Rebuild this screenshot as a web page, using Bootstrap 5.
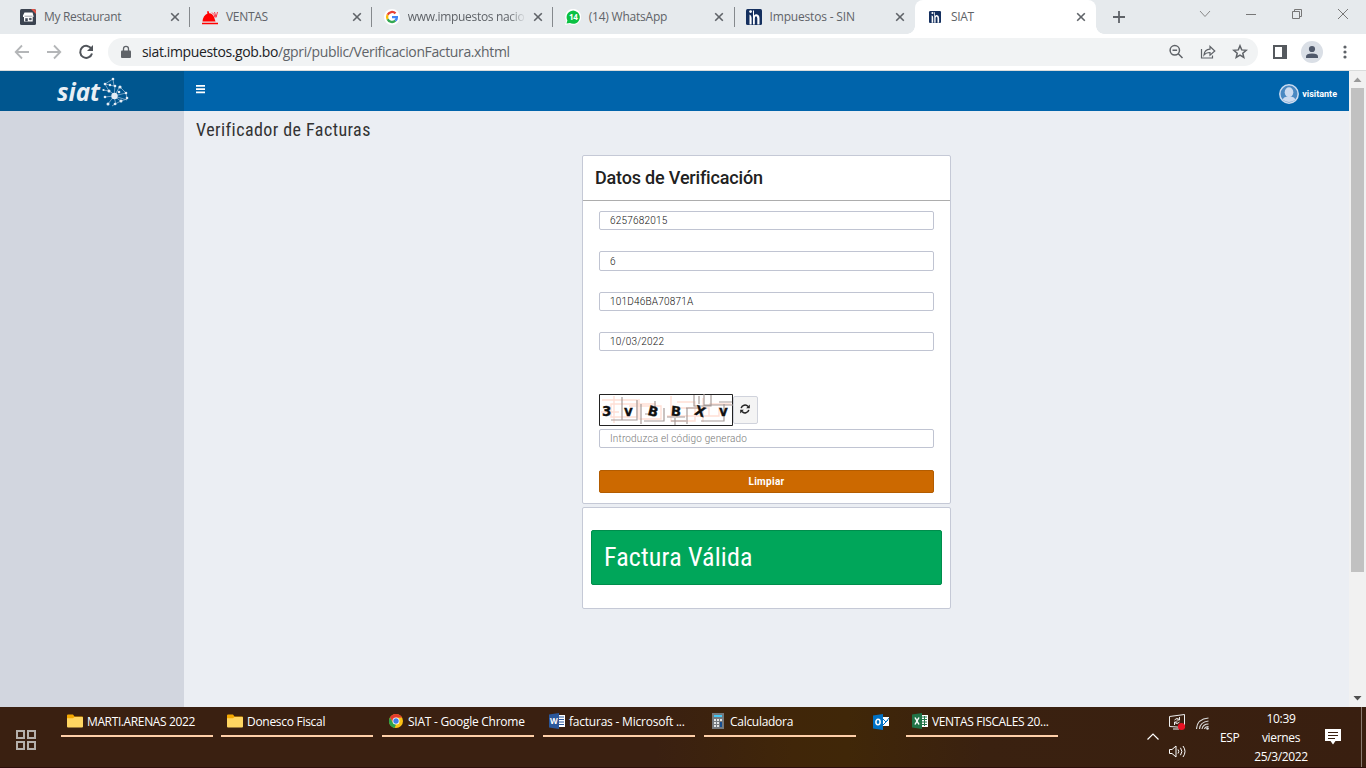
<!DOCTYPE html>
<html lang="es">
<head>
<meta charset="utf-8">
<title>SIAT</title>
<link rel="stylesheet" href="https://cdn.jsdelivr.net/npm/bootstrap@5.3.0/dist/css/bootstrap.min.css">
<script src="https://cdn.jsdelivr.net/npm/bootstrap@5.3.0/dist/js/bootstrap.bundle.min.js"></script>
<style>
body{width:1366px;height:768px;overflow:hidden;font-family:"Open Sans","Noto Sans",sans-serif;font-size:12px;line-height:16px;color:#5f6368;background:#fff}
svg{display:block;flex:none}
.tabstrip{height:34px;background:#e6eaed;padding-left:8px}
.tab{width:181.4px;height:34px;padding-left:12px;position:relative}
.tab .ttl{margin-left:8px;width:118px;font-size:12px;letter-spacing:-.32px;white-space:nowrap}
.tab .fade-end{-webkit-mask-image:linear-gradient(90deg,#000 85%,transparent);mask-image:linear-gradient(90deg,#000 85%,transparent)}
.tab .x{margin-left:8px}
.tab.sep::after{content:"";position:absolute;right:-1px;top:7px;width:1px;height:20px;background:#85898d}
.tab.on{background:#fff;border-radius:8px 8px 0 0}
.tab.on::before,.tab.on::after{content:"";position:absolute;bottom:0;width:8px;height:8px}
.tab.on::before{left:-8px;background:radial-gradient(circle at 0 0,transparent 7.5px,#fff 8px)}
.tab.on::after{right:-8px;background:radial-gradient(circle at 100% 0,transparent 7.5px,#fff 8px)}
.winbtn{width:46px;height:28px}
.toolbar{height:37px;border-bottom:1px solid #dadcdc;padding:4px 0 4px 14px}
.omni{width:1150px;height:28px;border-radius:14px;background:#f1f3f4;margin-left:14px;padding:0 10px 0 11px}
.url{margin-left:9px;font-size:14px;letter-spacing:-.37px;color:#5f6368;white-space:nowrap}
.url b{font-weight:400;color:#202124}
.view{height:636px}
.side{width:184px;background:#d2d6df}
.brand{height:40px;background:#00568f;padding:5px 0 0 57px}
.topbar{height:40px;background:#0064ab;padding:0 12px;font-family:Roboto,sans-serif;color:#fff}
.main-area{width:1165px;background:#ebeef3;font-family:Roboto,sans-serif;color:#333}
.cond{font-family:"Roboto Condensed",Roboto,sans-serif;font-stretch:75%}
.page-title{font-size:18px;line-height:24px;padding:7px 0 0 12px;margin:0;font-weight:400;color:#333;letter-spacing:.43px}
.panel{width:369px;background:#fff;border:1px solid #c5c9d6;border-radius:2px;margin-left:398px}
.panel-head{height:45px;border-bottom:1px solid #adadad;font-size:18px;font-weight:500;color:#212121;padding:0 12px;line-height:43px;letter-spacing:-.18px}
.panel .form-control{height:19px;min-height:0;padding:0 10px;border:1px solid #c0c4d2;border-radius:2px;font-family:Roboto,sans-serif;font-size:10px;line-height:17px;font-weight:300;color:#111;letter-spacing:.2px;box-shadow:none}
.panel .form-control::placeholder{color:#777;opacity:1;letter-spacing:.17px}
.refresh{width:25px;height:28px;background:#f4f4f4;border:1px solid #d0d3dc;border-radius:2px;padding:0}
.clear{height:23px;background:#cc6900;border:1px solid #b35c00;border-radius:2px;color:#fff;font-weight:700;font-size:10px;line-height:21px;padding:0;letter-spacing:.3px}
.clear:hover{background:#cc6900;color:#fff}
.valid{height:55px;background:#00a65a;border:1px solid #008d4c;border-radius:2px;color:#fff;font-size:26px;line-height:52px;padding:0 12px;margin:22px 8px 23px;letter-spacing:.16px}
.sbar{width:17px;background:#f1f1f1}
.thumb{width:13px;height:484px;background:#c1c1c1}
.taskbar{height:61px;color:#fff;background:linear-gradient(90deg,#3a2011 0,#3a2011 48%,#402609 58%,#402708 62%,#3a2110 72%,#391f10 100%);border-bottom:1px solid #2c0f0b}
.task{width:152px;height:30px;border-bottom:2px solid #ffcfa8;padding:1px 0 0 6px}
.task svg{margin-top:-1px}
.task span{margin-left:4px;font-size:12px;letter-spacing:-.29px;white-space:nowrap}
.tray{font-size:12px;letter-spacing:-.35px}
</style>
</head>
<body>
<svg width="0" height="0" class="position-absolute"><defs>
<symbol id="cross" viewBox="0 0 10 10"><path d="M1.200 1.200l7.600 7.600M8.800 1.200L1.200 8.800" stroke="#5f6368" stroke-width="1.600"/></symbol>
<symbol id="folder" viewBox="0 0 16 14"><path d="M0 1.500Q0 .5 1 .5h5l1.500 2H15q1 0 1 1V12H0z" fill="#f5a800"/><path d="M0 4.200h6L7.500 3H15q1 0 1 1v8.500q0 1-1 1H1q-1 0-1-1z" fill="#ffd662"/></symbol>
<symbol id="sin" viewBox="0 0 16 16"><rect width="16" height="16" rx="1.500" fill="#15305f"/><circle cx="4.600" cy="2.600" r="1.400" fill="#fff"/><path d="M3.500 5.500Q5.600 6 5.600 9v6.500H3.500zM7 1.500h1v5Q9 5 10.600 5.200 13.500 5.600 13.500 9.500v6h-2.200V9.500q-.2-2.200-1.300-2.200T8.800 9.500v6H7z" fill="#fff"/></symbol>
</defs></svg>

<div class="tabstrip d-flex">
  <div class="tab sep d-flex align-items-center">
    <svg width="16" height="16" viewBox="0 0 16 16"><rect width="16" height="16" rx="1.500" fill="#3b4350"/><path d="M11 0h3.500L16 1.500V5z" fill="#e25346"/><path d="M4.500 3.500h8l1 3.500v1h-.8v4.500H4V8H3V6.500z" fill="#fff"/><path d="M4.500 7.200h8M5.500 12V9.500h2V12zM9.300 9.300h2v1.500h-2z" fill="#3b4350" stroke="#3b4350" stroke-width=".5"/></svg>
    <span class="ttl">My Restaurant</span><svg class="x" width="10" height="10"><use href="#cross"/></svg></div>
  <div class="tab sep d-flex align-items-center" style="padding-left:12.600px">
    <svg width="16" height="16" viewBox="0 0 16 16"><path d="M0 13.800h16v1.500H0zM.5 12.500Q1 6.500 5.500 4.500L5 2.500 6.500 2l.7 2.200Q10.500 4.500 12 8l1.500 4.500z" fill="#f00"/><path d="M10 3.500q2.500 1.500 3 5M12.500 3l1.500 5M15.500 3l-1.500 5.500" stroke="#f23" stroke-width=".9" fill="none"/></svg>
    <span class="ttl">VENTAS</span><svg class="x" width="10" height="10"><use href="#cross"/></svg></div>
  <div class="tab sep d-flex align-items-center" style="padding-left:13px">
    <svg width="16" height="16" viewBox="0 0 16 16"><circle cx="8" cy="8" r="8" fill="#fff"/><g fill="none" stroke-width="2.300"><path d="M11.500 4.400A4.900 4.900 0 0 0 3.600 5.800" stroke="#ea4335"/><path d="M3.600 5.800a4.900 4.900 0 0 0 0 4.400" stroke="#fbbc05"/><path d="M3.600 10.200a4.900 4.900 0 0 0 7.700 1.500" stroke="#34a853"/><path d="M11.300 11.700Q13 10.200 12.900 8.200H8" stroke="#4285f4"/></g></svg>
    <span class="ttl fade-end">www.impuestos nacio</span><svg class="x" width="10" height="10" style="margin-left:7px"><use href="#cross"/></svg></div>
  <div class="tab sep d-flex align-items-center" style="padding-left:12.600px">
    <svg width="16" height="16" viewBox="0 0 16 16"><path d="M0 16L1.200 11.800A8 8 0 1 1 4.500 15z" fill="#fff"/><path d="M1.500 14.600l.9-3.200A6.600 6.600 0 1 1 5 14z" fill="#0bc143"/><text x="8.200" y="10.800" text-anchor="middle" font-size="8" font-weight="700" fill="#fff" font-family="Open Sans" letter-spacing="-.3">14</text></svg>
    <span class="ttl" style="letter-spacing:-.22px">(14) WhatsApp</span><svg class="x" width="10" height="10" style="margin-left:7.400px"><use href="#cross"/></svg></div>
  <div class="tab d-flex align-items-center">
    <svg width="16" height="16"><use href="#sin"/></svg>
    <span class="ttl" style="letter-spacing:-.18px">Impuestos - SIN</span><svg class="x" width="10" height="10" style="margin-left:7px"><use href="#cross"/></svg></div>
  <div class="tab on d-flex align-items-center">
    <svg width="16" height="16"><use href="#sin" x="1.500" y="2" width="13" height="12"/></svg>
    <span class="ttl">SIAT</span><svg class="x" width="10" height="10" style="margin-left:7px"><use href="#cross"/></svg></div>
  <svg class="align-self-center" style="margin-left:17px" width="12" height="12" viewBox="0 0 12 12"><path d="M6 0v12M0 6h12" stroke="#5f6368" stroke-width="1.800"/></svg>
  <div class="d-flex ms-auto">
    <div class="winbtn d-flex align-items-center justify-content-center"><svg width="12" height="8" viewBox="0 0 12 8" fill="none" stroke="#888"><path d="M1 1l5 5.500L11 1"/></svg></div>
    <div class="winbtn d-flex align-items-center justify-content-center"><svg width="10" height="10" fill="none" stroke="#777"><path d="M0 5.500h10"/></svg></div>
    <div class="winbtn d-flex align-items-center justify-content-center"><svg width="10" height="10" fill="none" stroke="#777"><path d="M.5 2.500h7v7h-7zM2.500 2.500v-2h7v7h-2"/></svg></div>
    <div class="winbtn d-flex align-items-center justify-content-center"><svg width="10" height="10" fill="none" stroke="#777"><path d="M0 0l10 10M10 0L0 10"/></svg></div>
  </div>
</div>

<div class="toolbar d-flex align-items-center">
  <svg width="16" height="16" viewBox="0 0 16 16" fill="none" stroke="#b4b6b8" stroke-width="1.800"><path d="M15 8H2M8 1.500L1.700 8 8 14.500"/></svg>
  <svg class="ms-3" width="16" height="16" viewBox="0 0 16 16" fill="none" stroke="#b4b6b8" stroke-width="1.800"><path d="M1 8h13M8 1.500L14.300 8 8 14.500"/></svg>
  <svg class="ms-3" width="16" height="16" viewBox="0 0 16 16" fill="none" stroke="#50545a" stroke-width="2"><path d="M13.500 5A6 6 0 1 0 14 9.500"/><path d="M15 1v6H9z" fill="#50545a" stroke="none"/></svg>
  <div class="omni d-flex align-items-center">
    <svg width="14" height="14" viewBox="0 0 14 14"><path d="M3 5.500h8q1 0 1 1V12q0 1-1 1H3q-1 0-1-1V6.500q0-1 1-1z" fill="#5f6368"/><path d="M4.500 6V3.800a2.500 2.500 0 0 1 5 0V6" fill="none" stroke="#5f6368" stroke-width="1.300"/></svg>
    <span class="url"><b>siat.impuestos.gob.bo</b>/gpri/public/VerificacionFactura.xhtml</span>
    <div class="d-flex align-items-center ms-auto gap-3">
      <svg width="16" height="16" viewBox="0 0 16 16" fill="none" stroke="#5f6368" stroke-width="1.500"><circle cx="6.800" cy="6.300" r="4.700"/><path d="M10.300 9.800l4.200 4.200M4.500 6.300h4.600"/></svg>
      <svg width="16" height="16" viewBox="0 0 16 16" fill="none" stroke="#5f6368" stroke-width="1.200"><path d="M1.500 5v9h11v-2.500"/><path d="M4 11q.5-5.500 6-5.800V2.500L14.800 7 10 11.200V8.500Q6 8.500 4 11z"/></svg>
      <svg width="16" height="16" viewBox="0 0 16 16" fill="none" stroke="#5f6368" stroke-width="1.500"><path d="M8 1.800l1.700 4.100 4.500.4-3.400 2.900 1 4.300L8 11.200l-3.800 2.300 1-4.300-3.400-2.900 4.500-.4z"/></svg>
    </div>
  </div>
  <svg style="margin-left:15px" width="14" height="14" viewBox="0 0 14 14"><path d="M0 0h14v14H0z" fill="#55595e"/><path d="M2 2h7v10H2z" fill="#fff"/></svg>
  <svg style="margin-left:14px" width="22" height="22" viewBox="0 0 22 22"><circle cx="11" cy="11" r="11" fill="#dadfe6"/><circle cx="11" cy="8" r="3.100" fill="#50596b"/><path d="M5 17v-1.500Q5 12.500 11 12.400q6 .1 6 3.100V17z" fill="#50596b"/></svg>
  <svg style="margin-left:18.500px" width="6" height="14" viewBox="0 0 6 14" fill="#5f6368"><circle cx="3" cy="2" r="1.600"/><circle cx="3" cy="7" r="1.600"/><circle cx="3" cy="12" r="1.600"/></svg>
</div>

<div class="view d-flex">
  <aside class="side">
    <div class="brand">
      <svg class="overflow-visible" width="74" height="34" viewBox="0 0 74 34"><text x="0" y="24.500" font-family="Open Sans" font-style="italic" font-weight="700" font-size="25" textLength="43" lengthAdjust="spacingAndGlyphs" fill="#e9eff5">siat</text>
      <g stroke="#a5c0d8" stroke-width=".7" fill="none"><path d="M48 8l8-5 1 7-9-2 4 7M52 15l6 4 5-9M57 20l-9 1M57 20l-6 8M57 20l2 9M57 20l8 6M57 20l13 4M57 20l12-3M58 10l-1 10M46 14l6 1M64 25l6-2-1-6-6-6M55 30l3-2 6-3"/></g>
      <g fill="#e4edf5"><circle cx="57.500" cy="20" r="3.200"/><circle cx="48" cy="8" r="1.300"/><circle cx="56" cy="3" r="1.300"/><circle cx="53" cy="9" r="1.200"/><circle cx="58" cy="10" r="1.300"/><circle cx="52" cy="15" r="1.500"/><circle cx="63" cy="11" r="1.600"/><circle cx="62" cy="16" r="1.300"/><circle cx="69" cy="17" r="1.300"/><circle cx="70" cy="22" r="1.300"/><circle cx="64" cy="25" r="1.500"/><circle cx="48" cy="21" r="1.300"/><circle cx="51" cy="28" r="1.500"/><circle cx="58" cy="28" r="1.300"/><circle cx="46.500" cy="14" r="1.100"/></g></svg>
    </div>
  </aside>
  <main class="main-area">
    <div class="topbar d-flex">
      <svg style="margin-top:14px" width="9" height="9" fill="#fff"><path d="M0 0h9v1.700H0zM0 3.300h9V5H0zM0 6.600h9v1.700H0z"/></svg>
      <div class="d-flex align-items-center ms-auto" style="padding-top:6px">
        <svg width="20" height="20" viewBox="0 0 20 20"><circle cx="10" cy="10" r="9.200" fill="#4a89c2" stroke="#cddcf0" stroke-width="1.500"/><path d="M3.500 15.500Q4.500 13 8 12.500h4q3.500.5 4.500 3Q13.500 18 10 18t-6.500-2.500z" fill="#cddcf0"/><ellipse cx="10" cy="8.300" rx="4.300" ry="5" fill="#cddcf0"/></svg>
        <strong style="font-size:9px;margin-left:3px">visitante</strong>
      </div>
    </div>
    <h1 class="page-title cond">Verificador de Facturas</h1>
    <section class="panel" style="margin-top:13px;height:349px">
      <div class="panel-head">Datos de Verificación</div>
      <div class="px-3" style="padding-top:10px">
        <input class="form-control" value="6257682015">
        <input class="form-control" value="6" style="margin-top:21px;height:20px">
        <input class="form-control" value="101D46BA70871A" style="margin-top:21px">
        <input class="form-control" value="10/03/2022" style="margin-top:21px">
        <div class="d-flex" style="margin-top:43px">
          <svg width="134" height="32" viewBox="0 0 134 32"><path d="M.5.500h133v31H.5z" fill="#fff" stroke="#222"/>
            <g fill="none" stroke="#ffdfd5" stroke-width="1.400"><path d="M3 6h35v17H12V10h45M40 5v20h22V12H30M2 18h18M72 2v25H96V8H78M72 14h38v8H68M104 4v24M110 10h22M86 22h34v-9M15 2v27"/></g>
            <g fill="none" stroke="#a79c99" stroke-width="1.200"><path d="M23 3v23H12M38 6v20H18M42 10v20M56 7v13H46M65 14v13H45M95 1v11h17V1M105 0v11h29M100 2v8M87 14h14M88 14v16M76 24v7M72 27h15M120 8h13M102 27h23V10M68 23h18"/></g>
            <g font-family="DejaVu Sans" font-weight="700" font-size="13.500" fill="#111" stroke="#111" stroke-width=".3"><text x="3" y="22">3</text><text x="25" y="22">v</text><text x="49" y="22" transform="rotate(14 54 17)">B</text><text x="72" y="22" transform="rotate(5 77 17)">B</text><text x="96" y="22" transform="rotate(18 101 17)">X</text><text x="120" y="22">v</text></g></svg>
          <button class="btn refresh d-flex justify-content-center" style="margin-top:2px"><svg width="10" height="10" viewBox="0 0 10 10" style="margin:7px 1px 0 0" fill="none" stroke="#222" stroke-width="1.500"><path d="M1.200 4.200A3.900 3.900 0 0 1 8 2.500M8.800 5.800A3.900 3.900 0 0 1 2 7.500"/><path d="M9.800.6v3.600H6.200zM.2 9.400V5.800h3.600z" fill="#222" stroke="none"/></svg></button>
        </div>
        <input class="form-control" placeholder="Introduzca el código generado" style="margin-top:3px">
        <button class="btn clear w-100 d-block" style="margin-top:22px">Limpiar</button>
      </div>
    </section>
    <section class="panel" style="margin-top:3px;height:102px"><div class="valid cond">Factura Válida</div></section>
  </main>
  <div class="sbar d-flex flex-column align-items-center">
    <svg width="17" height="17"><path d="M4.500 11l4-4.500 4 4.500z" fill="#9a9a9a"/></svg>
    <div class="thumb"></div>
    <svg class="mt-auto" width="17" height="17"><path d="M4.500 6l4 4.500 4-4.500z" fill="#505050"/></svg>
  </div>
</div>

<footer class="taskbar d-flex">
  <svg style="margin:23px 0 0 16px" width="20" height="20" viewBox="0 0 20 20" fill="none" stroke="#b5b0ac" stroke-width="2"><path d="M1 1h7v7H1zM12 1h7v7h-7zM1 12h7v7H1zM12 12h7v7h-7z"/></svg>
  <div class="task d-flex align-items-center" style="margin-left:25px"><svg width="16" height="14"><use href="#folder"/></svg><span style="letter-spacing:-.38px">MARTI.ARENAS 2022</span></div>
  <div class="task d-flex align-items-center" style="margin-left:8px"><svg width="16" height="14"><use href="#folder"/></svg><span>Donesco Fiscal</span></div>
  <div class="task d-flex align-items-center" style="margin-left:9px"><svg width="16" height="16" viewBox="0 0 16 16"><circle cx="8" cy="8" r="7" fill="#fbc116"/><path d="M1.900 4.500A7 7 0 0 1 14.100 4.500L8 4.700 5 9.500z" fill="#e33b2e"/><path d="M1.900 4.500L5 9.700l3 2L6.500 14.900A7 7 0 0 1 1.900 4.500z" fill="#2ba24c"/><circle cx="8" cy="8" r="3.500" fill="#fff"/><circle cx="8" cy="8" r="2.700" fill="#3f7de8"/></svg><span style="letter-spacing:-.25px">SIAT - Google Chrome</span></div>
  <div class="task d-flex align-items-center" style="margin-left:9px"><svg width="16" height="16" viewBox="0 0 16 16"><path d="M9 2h7v12H9z" fill="#fff"/><path d="M10 4h5M10 6.500h5M10 9h5M10 11.500h5" stroke="#2b579a"/><path d="M0 1.500L10 0v16L0 14.500z" fill="#2b579a"/><text x="1" y="11" font-family="Open Sans" font-size="8" font-weight="700" fill="#fff">W</text></svg><span style="letter-spacing:-.22px">facturas - Microsoft ...</span></div>
  <div class="task d-flex align-items-center" style="margin-left:9px"><svg width="16" height="16" viewBox="0 0 16 16"><path d="M2 0h12v16H2z" fill="#75797d"/><path d="M4 2h8v2H4z" fill="#43c8f5"/><path d="M4 6h2v2H4zm3 0h2v2H7zm3 0h2v2h-2zM4 9h2v2H4zm3 0h2v2H7zM4 12h2v2H4zm3 0h2v2H7z" fill="#e2e4e6"/><path d="M10 9h2v5h-2z" fill="#164e91"/></svg><span>Calculadora</span></div>
  <svg style="margin:7px 0 0 17px" width="16" height="16" viewBox="0 0 16 16"><path d="M9 3h7v9H9z" fill="#fff"/><path d="M10 5l3 3 3-4M10 11l5-5" fill="none" stroke="#0072c6"/><path d="M0 1.500L10 0v16L0 14.500z" fill="#0072c6"/><ellipse cx="5" cy="8" rx="2.100" ry="2.700" fill="none" stroke="#fff" stroke-width="1.500"/></svg>
  <div class="task d-flex align-items-center" style="margin-left:17px"><svg width="16" height="16" viewBox="0 0 16 16"><path d="M9 2h7v12H9z" fill="#fff"/><path d="M10 4h5M10 6.500h5M10 9h5M10 11.500h5M12.500 3v10" stroke="#217346"/><path d="M0 1.500L10 0v16L0 14.500z" fill="#217346"/><path d="M3 4.500l4 7M7 4.500l-4 7" stroke="#fff" stroke-width="1.500"/></svg><span style="letter-spacing:-.35px">VENTAS FISCALES 20...</span></div>
  <div class="tray d-flex ms-auto">
    <svg style="margin:26px 10px 0 0" width="12" height="8" fill="none" stroke="#fff" stroke-width="1.200"><path d="M.5 6.500L6 1l5.500 5.500"/></svg>
    <div style="width:16px;padding-top:7px">
      <svg width="17" height="17" viewBox="0 0 17 17" fill="none" stroke="#eee"><path d="M.5 2.500L15.500.5v13L.5 12.500zM4 15h6"/><path d="M5.500 6q2-3 5-.5M10.500 3v3H7.500M10.500 8q-2 3-5 .5M5.500 11V8h3"/><circle cx="12.500" cy="12.500" r="3.600" fill="#e81123" stroke="none"/></svg>
      <svg style="margin-top:13px" width="17" height="16" viewBox="0 0 17 16" fill="none" stroke="#fff"><path d="M.5 5.500H3l4-3.500v11L3 9.500H.5zM9 5.500q1.500 2 0 4M11.500 3.800q2.800 3.700 0 7.400M14 2q4 5.500 0 11"/></svg>
    </div>
    <svg style="margin:10px 0 0 11px" width="13" height="13" viewBox="0 0 13 13" fill="none" stroke="#ddd" stroke-width="1.100"><path d="M.5 12Q1 2 12.500 1M3.500 12Q4 5 12.500 4M6 12q1-5 6.500-5M8.500 12q.5-2.500 4-2.500"/><circle cx="11.500" cy="11.500" r="1.300" fill="#ddd" stroke="none"/></svg>
    <span style="margin:23px 0 0 11px;width:20px">ESP</span>
    <div class="text-center" style="width:60px;margin-left:11px;padding-top:2px;line-height:19px">10:39<br>viernes<br>25/3/2022</div>
    <svg style="margin:22px 20px 0 14px" width="16" height="16" viewBox="0 0 16 16"><path d="M0 0h16v12h-5.500L8 15.500 5.500 12H0z" fill="#fff"/><path d="M3 3.500h10M3 6.500h10M3 9.500h7" stroke="#3a2011"/></svg>
    <div style="width:1px;margin-right:4px;background:#8a7b72"></div>
  </div>
</footer>
</body>
</html>
